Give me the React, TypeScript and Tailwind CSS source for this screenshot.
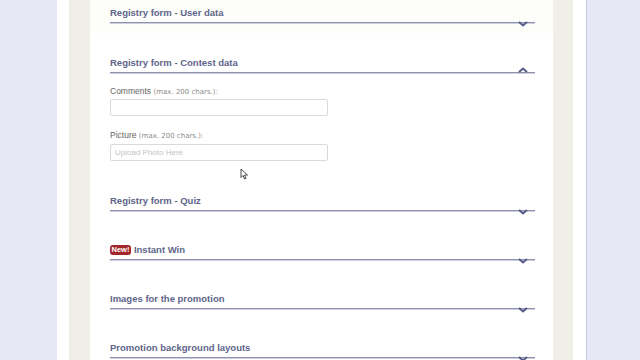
import React from "react";

const font = { fontFamily: '"Liberation Sans", Arial, sans-serif' };
const small = { fontFamily: '"DejaVu Sans", Verdana, sans-serif' };

function Chevron({ up }: { up?: boolean }) {
  return (
    <svg
      width="10"
      height="6"
      viewBox="0 0 10 6"
      className={up ? "absolute right-[7px] top-[-6px]" : "absolute right-[7px] top-[-2px]"}
    >
      {up ? (
        <path d="M1 5 L5 1.5 L9 5" fill="none" stroke="#575c88" strokeWidth="2" />
      ) : (
        <path d="M1 1 L5 4.5 L9 1" fill="none" stroke="#575c88" strokeWidth="2" />
      )}
    </svg>
  );
}

function Header({ title, up, badge, pt }: { title: string; up?: boolean; badge?: boolean; pt: string }) {
  return (
    <div className={pt}>
      <div className="flex h-[14px] items-center gap-[3px] text-[9.5px] font-bold leading-[14px] text-[#5e6589]">
        {badge && (
          <span className="flex h-[10px] items-center rounded-[3px] bg-[#a3262b] px-[1.5px] text-[7.5px] font-bold leading-[10px] text-white">
            New!
          </span>
        )}
        <span>{title}</span>
      </div>
      <div className="relative mt-[2px] h-[2px] border-t border-[#8f92ae] bg-[#cfd0dd]">
        <Chevron up={up} />
      </div>
    </div>
  );
}

function Field({ label, placeholder, pt, gap }: { label: string; placeholder?: string; pt: string; gap: string }) {
  return (
    <div className={pt}>
      <div className="h-[12px] text-[8.5px] leading-[12px] text-[#666]">
        {label}{" "}
        <span className="text-[7px] text-[#8a8a8a]" style={small}>
          (max. 200 chars.):
        </span>
      </div>
      <div
        className={`${gap} flex h-[17px] w-[218px] items-center rounded-[2px] border border-[#dadada] bg-white px-[4px] text-[8px] text-[#c4c4c4]`}
      >
        {placeholder}
      </div>
    </div>
  );
}

export default function App() {
  return (
    <div className="flex h-[360px] w-[640px] overflow-hidden bg-[#e6e9f5]" style={font}>
      <div className="w-[57px] shrink-0" />
      <div className="flex w-[530px] shrink-0 border-r border-[#c9cce2] bg-white pl-[12px]">
        <div className="w-[21px] shrink-0 bg-[#efefe8]" />
        <div className="relative w-[463px] shrink-0 bg-white pl-[20px] pr-[18px]">
          <div className="absolute left-0 right-0 top-0 h-[33px] bg-[#fdfdf9]" />
          <div className="relative">
            <Header title="Registry form - User data" pt="pt-[6px]" />
            <Header title="Registry form - Contest data" up pt="pt-[32px]" />
            <Field label="Comments" pt="pt-[11px]" gap="mt-[2px]" />
            <Field label="Picture" placeholder="Upload Photo Here" pt="pt-[13px]" gap="mt-[3px]" />
            <Header title="Registry form - Quiz" pt="pt-[33px]" />
            <Header title="Instant Win" badge pt="pt-[31px]" />
            <Header title="Images for the promotion" pt="pt-[31px]" />
            <Header title="Promotion background layouts" pt="pt-[31px]" />
          </div>
          <svg
            width="9"
            height="12"
            viewBox="0 0 9 12"
            className="absolute left-[150px] top-[168px]"
          >
            <path d="M1 1 L1 9.5 L3 7.5 L4.6 11 L6 10.4 L4.5 7 L7.5 7 Z" fill="#fff" stroke="#333" strokeWidth="0.9" />
          </svg>
        </div>
        <div className="w-[20px] shrink-0 bg-[#efefe8]" />
        <div className="w-[13px] shrink-0 bg-white" />
      </div>
    </div>
  );
}
